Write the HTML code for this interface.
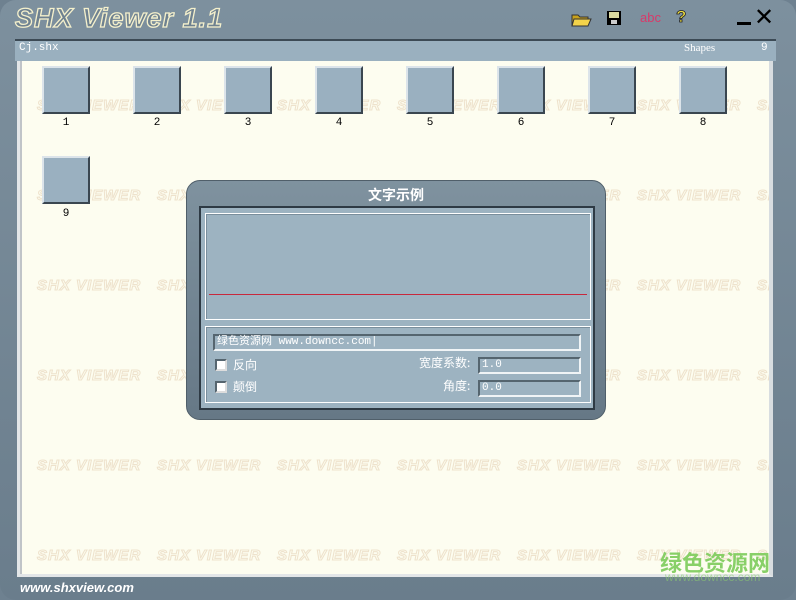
<!DOCTYPE html>
<html><head><meta charset="utf-8"><style>
*{margin:0;padding:0;box-sizing:border-box}
body{width:796px;height:600px;overflow:hidden;background:#6e8190;font-family:"Liberation Sans","Noto Sans CJK SC",sans-serif;position:relative}
.frame{position:absolute;left:0;top:0;width:796px;height:600px;background:linear-gradient(#7d909e,#6a7d8c);border-radius:16px}
.title{position:absolute;left:15px;top:3px;font:italic bold 27px "Liberation Sans",sans-serif;color:#6e8190;-webkit-text-stroke:1.3px #f4f0cc;letter-spacing:1px}
.hdr{position:absolute;left:15px;top:39px;width:761px;height:22px;background:#9ab0bf;border-top:2px solid #3c4a55}
.hdr span{position:absolute;top:1px;font:11px "Liberation Mono",monospace;color:#fff}
.content{position:absolute;left:17px;top:61px;width:756px;height:516px;background:#fdfdf0;border:3px solid #e3e6e8;border-top:none;border-right:4px solid #d8dde0;box-shadow:inset 2px 0 0 #c0c4c8}
#w{position:absolute;left:20px;top:61px;width:749px;height:512px;overflow:hidden}
.wm{position:absolute;white-space:nowrap;font:italic bold 15px "Liberation Sans",sans-serif;color:#fdfdf0;-webkit-text-stroke:1px #eee2cc;letter-spacing:1px}
.th{position:absolute;width:48px;height:48px;background:#9ab0c0;border:2px solid;border-color:#dce4ea #3a4650 #3a4650 #dce4ea}
.lb{position:absolute;font:11px "Liberation Mono",monospace;color:#000;width:48px;text-align:center}
.dlg{position:absolute;left:186px;top:180px;width:420px;height:240px;background:linear-gradient(#7f929f,#667886);border-radius:14px;border:1px solid #505f6a}
.dt{position:absolute;left:0;width:100%;top:4px;text-align:center;color:#fff;font:bold 14px "Noto Sans CJK SC",sans-serif}
.dp{position:absolute;left:12px;top:25px;width:396px;height:204px;background:#9db3c1;border:2px solid #2e3a44}
.box{position:absolute;border:1px solid #fff;box-shadow:inset 1px 1px 0 #7a8e9c}
.inp{position:absolute;height:17px;background:#9db3c1;border:2px solid;border-color:#55656f #f0f4f6 #f0f4f6 #55656f;font:11px "Liberation Mono","Noto Sans CJK SC",monospace;color:#fff;padding-left:2px;line-height:13px}
.cb{position:absolute;width:12px;height:12px;background:#fff;border:2px solid;border-color:#55656f #ddd #ddd #55656f}
.t{position:absolute;color:#fff;font:12px "Noto Sans CJK SC",sans-serif}
</style></head><body>
<div class="frame"></div>
<div class="title">SHX Viewer 1.1</div>
<svg style="position:absolute;left:571px;top:10px" width="22" height="17"><path d="M1 5h6l2 2h8v9H1z" fill="#c9a21a" stroke="#333"/><path d="M3 9h17l-3 7H1z" fill="#f3d34a" stroke="#333"/></svg>
<svg style="position:absolute;left:606px;top:10px" width="16" height="16"><rect x="1" y="1" width="14" height="14" fill="#000"/><rect x="3" y="2" width="10" height="6" fill="#d8d8a0"/><rect x="5" y="10" width="6" height="4" fill="#ccc"/></svg>
<div style="position:absolute;left:640px;top:10px;color:#d83a6a;font:13px 'Liberation Sans',sans-serif">abc</div>
<div style="position:absolute;left:676px;top:7px;color:#f0e040;font:bold 17px 'Liberation Sans',sans-serif;-webkit-text-stroke:.8px #222">?</div>
<div style="position:absolute;left:737px;top:22px;width:14px;height:3px;background:#000"></div>
<div style="position:absolute;left:754px;top:6px;font:24px 'Liberation Sans',sans-serif;color:#000;line-height:24px">✕</div>
<div class="hdr"><span style="left:4px">Cj.shx</span><span style="left:669px;font-family:'Liberation Serif',serif">Shapes</span><span style="left:746px">9</span></div>
<div class="content"></div>
<div id="w"></div>
<div id="t2"></div>
<div style="position:absolute;left:20px;top:580px;color:#fff;font:italic bold 13px 'Liberation Sans',sans-serif">www.shxview.com</div>
<div style="position:absolute;left:660px;top:546px;color:#7ccc5a;font:bold 22px 'Noto Sans CJK SC',sans-serif;opacity:.9">绿色资源网</div>
<div style="position:absolute;left:665px;top:570px;color:#8ccc70;font:12px 'Liberation Sans',sans-serif;opacity:.6">www.downcc.com</div>
<div class="dlg"><div class="dt">文字示例</div>
<div class="dp">
<div class="box" style="left:4px;top:5px;width:386px;height:107px"></div>
<div style="position:absolute;left:8px;top:86px;width:378px;height:1px;background:#c8283c"></div>
<div class="box" style="left:4px;top:118px;width:386px;height:77px"></div>
<div class="inp" style="left:12px;top:126px;width:368px">绿色资源网 www.downcc.com|</div>
<div class="cb" style="left:14px;top:151px"></div><div class="t" style="left:32px;top:148px">反向</div>
<div class="cb" style="left:14px;top:173px"></div><div class="t" style="left:32px;top:170px">颠倒</div>
<div class="t" style="left:218px;top:146px">宽度系数:</div>
<div class="inp" style="left:277px;top:149px;width:103px">1.0</div>
<div class="t" style="left:242px;top:169px">角度:</div>
<div class="inp" style="left:277px;top:172px;width:103px">0.0</div>
</div></div>
<script>
var h='',g='';
for(var r=0;r<6;r++)for(var c=0;c<7;c++)h+='<div class="wm" style="left:'+(17+c*120)+'px;top:'+(36+r*90)+'px">SHX VIEWER</div>';
for(var i=0;i<8;i++){g+='<div class="th" style="left:'+(42+i*91)+'px;top:66px"></div><div class="lb" style="left:'+(42+i*91)+'px;top:117px">'+(i+1)+'</div>';}
g+='<div class="th" style="left:42px;top:156px"></div><div class="lb" style="left:42px;top:208px">9</div>';
document.getElementById('w').innerHTML=h;
document.getElementById('t2').innerHTML=g;
</script>
</body></html>
